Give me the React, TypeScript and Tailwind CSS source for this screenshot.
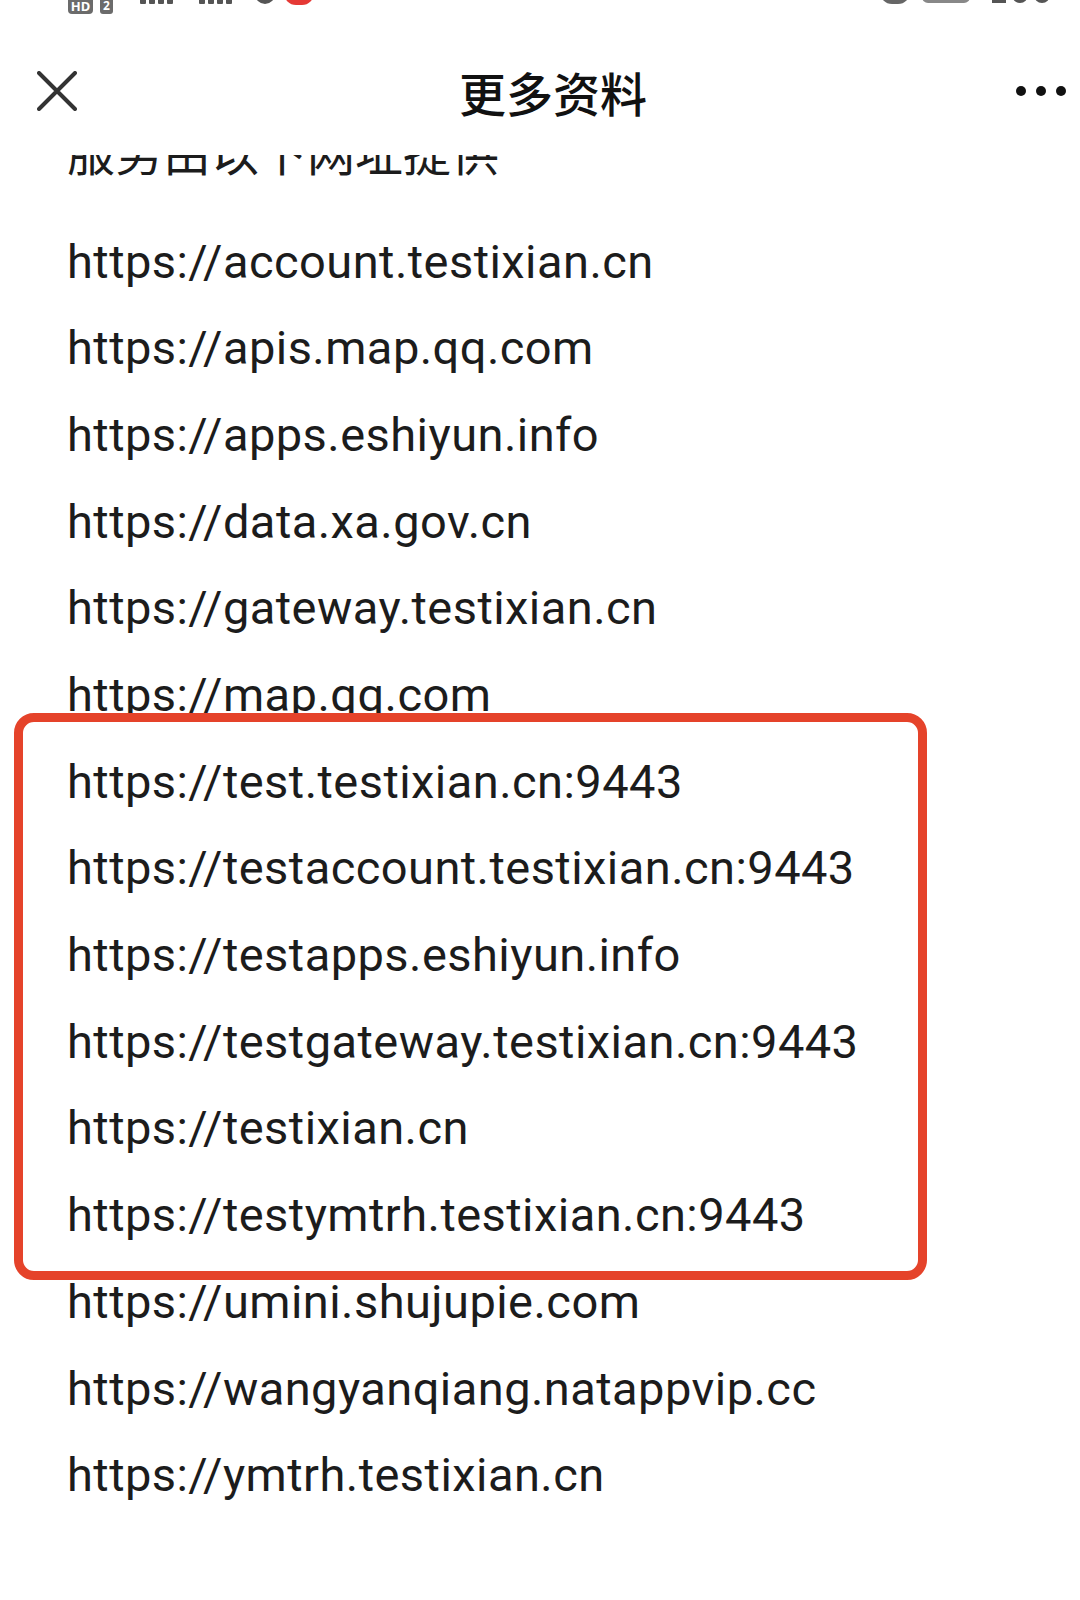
import React from "react";

const urls = [
  "https://account.testixian.cn",
  "https://apis.map.qq.com",
  "https://apps.eshiyun.info",
  "https://data.xa.gov.cn",
  "https://gateway.testixian.cn",
  "https://map.qq.com",
];

const boxed = [
  "https://test.testixian.cn:9443",
  "https://testaccount.testixian.cn:9443",
  "https://testapps.eshiyun.info",
  "https://testgateway.testixian.cn:9443",
  "https://testixian.cn",
  "https://testymtrh.testixian.cn:9443",
];

const rest = [
  "https://umini.shujupie.com",
  "https://wangyanqiang.natappvip.cc",
  "https://ymtrh.testixian.cn",
];

function Row({ text }: { text: string }) {
  return <div className="h-[86.7px] leading-[86.7px] whitespace-nowrap">{text}</div>;
}

function Bars() {
  return (
    <div className="flex items-end gap-[3px] h-[24px] -mt-[20px]">
      <div className="w-[6px] h-[8px] bg-[#555] rounded-[1px]" />
      <div className="w-[6px] h-[12px] bg-[#555] rounded-[1px]" />
      <div className="w-[6px] h-[16px] bg-[#555] rounded-[1px]" />
      <div className="w-[6px] h-[22px] bg-[#555] rounded-[1px]" />
    </div>
  );
}

function StatusBar() {
  return (
    <div className="h-[16px] overflow-hidden flex items-start">
      <div className="ml-[68px] h-[28px] -mt-[14px] w-[25px] rounded-[4px] bg-[#6b6b6b] text-white text-[13px] font-bold leading-[40px] text-center">
        HD
      </div>
      <div className="ml-[7px] h-[28px] -mt-[14px] w-[13px] rounded-[3px] bg-[#6b6b6b] text-white text-[12px] font-bold leading-[40px] text-center">
        2
      </div>
      <div className="ml-[27px]">
        <Bars />
      </div>
      <div className="ml-[26px]">
        <Bars />
      </div>
      <div className="ml-[23px] w-[20px] h-[24px] -mt-[20px] rounded-b-full bg-[#555]" />
      <div className="ml-[9px] w-[30px] h-[24px] -mt-[19px] rounded-full bg-[#e53935]" />
      <div className="ml-auto w-[30px] h-[24px] -mt-[20px] rounded-full bg-[#666]" />
      <div className="ml-[12px] w-[48px] h-[24px] -mt-[21px] rounded-[6px] border-[3px] border-[#888]" />
      <div className="ml-[22px] mr-[30px] w-[58px] h-[24px] -mt-[21px] flex gap-[6px]">
        <div className="w-[14px] h-full bg-[#555]" />
        <div className="w-[16px] h-full rounded-full bg-[#555]" />
        <div className="w-[16px] h-full rounded-full bg-[#555]" />
      </div>
    </div>
  );
}

export default function App() {
  return (
    <div className="w-[1080px] h-[1600px] bg-white overflow-hidden text-[#1c1c1c]">
      <div className="h-[155px] bg-white flex flex-col relative z-10">
        <StatusBar />
        <div className="flex items-center pt-[11px] h-[139px]">
          <svg className="ml-[37px] w-[40px] h-[40px]" viewBox="0 0 40 40" fill="none">
            <path d="M2 2L38 38M38 2L2 38" stroke="#333" strokeWidth="4" strokeLinecap="round" />
          </svg>
          <div className="ml-[382px] text-[47px] leading-none font-medium text-[#111] font-['Noto_Sans_CJK_SC',sans-serif]">
            更多资料
          </div>
          <div className="ml-auto mr-[14px] flex gap-[10px]">
            <div className="w-[10px] h-[10px] rounded-full bg-[#111]" />
            <div className="w-[10px] h-[10px] rounded-full bg-[#111]" />
            <div className="w-[10px] h-[10px] rounded-full bg-[#111]" />
          </div>
        </div>
      </div>

      <div className="pl-[67px]">
        <div className="-mt-[29px] text-[48px] leading-none font-['Noto_Sans_CJK_SC',sans-serif] whitespace-nowrap">
          服务由以下网址提供
        </div>
        <div className="mt-[44.6px] text-[47px] tracking-[0.45px] font-['Roboto',sans-serif]">
          {urls.map((u) => (
            <Row key={u} text={u} />
          ))}
          <div className="relative -ml-[53px] w-[913px] -mt-[25.6px] -mb-[20.7px] pt-[16.6px] pb-[11.7px] pl-[44px] border-[9px] border-[#e5432a] rounded-[20px] bg-white">
            {boxed.map((u) => (
              <Row key={u} text={u} />
            ))}
          </div>
          {rest.map((u) => (
            <Row key={u} text={u} />
          ))}
        </div>
      </div>
    </div>
  );
}
